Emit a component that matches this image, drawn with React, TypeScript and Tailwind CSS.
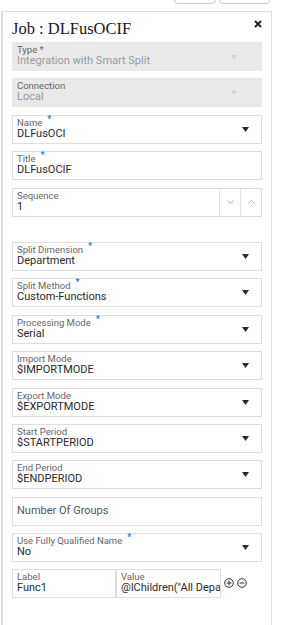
import React from "react";

const sans = { fontFamily: "Roboto, 'Noto Sans', Arial, sans-serif" };

function Req() {
  return (
    <span className="relative -top-[3px] ml-[5px] text-[9px] font-bold leading-none text-[#2a78c2]">*</span>
  );
}

function Caret({ disabled }: { disabled?: boolean }) {
  return disabled ? (
    <svg width="6" height="4" viewBox="0 0 6 4" className="mr-[24px] shrink-0">
      <path d="M0 0 L6 0 L3 4 Z" fill="#d2d2d2" />
    </svg>
  ) : (
    <svg width="7" height="5" viewBox="0 0 7 5" className="mr-[12px] shrink-0">
      <path d="M0 0 L7 0 L3.5 5 Z" fill="#2b2b2b" />
    </svg>
  );
}

function Field({
  label,
  value,
  req,
  disabled,
  caret = true,
  className = "",
}: {
  label: string;
  value: string;
  req?: boolean;
  disabled?: boolean;
  caret?: boolean;
  className?: string;
}) {
  return (
    <div
      className={`box-border flex h-[29px] w-[250px] items-center border ${
        disabled ? "border-[#e8e8e8] bg-[#e9e9e9]" : "border-[#dedede] bg-white"
      } ${className}`}
    >
      <div className="flex min-w-0 flex-1 flex-col self-stretch pl-[4px] pt-[2px]">
        <div className="flex items-start text-[9.5px] leading-[10px] text-[#666]">
          <span>{label}</span>
          {req && <Req />}
        </div>
        <div className={`text-[11px] leading-[12px] ${disabled ? "text-[#9a9a9a]" : "text-[#2a2a2a]"}`}>{value}</div>
      </div>
      {caret && <Caret disabled={disabled} />}
    </div>
  );
}

export default function App() {
  return (
    <div className="h-[625px] w-[282px] overflow-hidden bg-white" style={sans}>
      {/* top buttons (cut off) */}
      <div className="flex h-[4px] items-end gap-[3px] overflow-hidden pl-[174px]">
        <div className="box-border h-[20px] w-[42px] rounded-[4px] border border-[#c9c9c9]" />
        <div className="box-border h-[20px] w-[51px] rounded-[4px] border border-[#c9c9c9]" />
      </div>

      {/* panel */}
      <div className="ml-[1px] mt-[7px] box-border h-[640px] w-[271px] border-l-2 border-r border-t border-[#dfdfdf] px-[9px]">
        <div className="flex h-[30px] items-start justify-between">
          <div
            className="pt-[7px] text-[16.5px] leading-[20px] text-[#1a1a1a]"
            style={{ fontFamily: "'Liberation Serif', 'Times New Roman', serif" }}
          >
            Job : DLFusOCIF
          </div>
          <svg width="8" height="8" viewBox="0 0 8 8" className="mt-[8px]">
            <path d="M1 1 L7 7 M7 1 L1 7" stroke="#222" strokeWidth="2" />
          </svg>
        </div>

        <div className="flex flex-col gap-[7.4px]">
          <Field label="Type *" value="Integration with Smart Split" disabled />
          <Field label="Connection" value="Local" disabled />
          <Field label="Name" value="DLFusOCI" req />
          <Field label="Title" value="DLFusOCIF" req caret={false} />
          <div className="box-border flex h-[29px] w-[250px] border border-[#dedede] bg-white">
            <div className="flex min-w-0 flex-1 flex-col pl-[4px] pt-[2px]">
              <div className="text-[9.5px] leading-[10px] text-[#666]">Sequence</div>
              <div className="text-[11px] leading-[12px] text-[#2a2a2a]">1</div>
            </div>
            <div className="flex w-[21px] items-center justify-center border-l border-[#e3e3e3]">
              <svg width="7" height="4" viewBox="0 0 7 4">
                <path d="M0.5 0.5 L3.5 3.5 L6.5 0.5" fill="none" stroke="#b5b5b5" strokeWidth="1" />
              </svg>
            </div>
            <div className="flex w-[21px] items-center justify-center border-l border-[#e3e3e3]">
              <svg width="7" height="4" viewBox="0 0 7 4">
                <path d="M0.5 3.5 L3.5 0.5 L6.5 3.5" fill="none" stroke="#b5b5b5" strokeWidth="1" />
              </svg>
            </div>
          </div>

          <Field label="Split Dimension" value="Department" req className="mt-[18px]" />
          <Field label="Split Method" value="Custom-Functions" req />
          <Field label="Processing Mode" value="Serial" req />
          <Field label="Import Mode" value="$IMPORTMODE" />
          <Field label="Export Mode" value="$EXPORTMODE" />
          <Field label="Start Period" value="$STARTPERIOD" />
          <Field label="End Period" value="$ENDPERIOD" />
          <div className="box-border flex h-[29px] w-[250px] items-center border border-[#dedede] bg-white pl-[4px] text-[11px] text-[#555]">
            Number Of Groups
          </div>
          <Field label="Use Fully Qualified Name" value="No" req />

          <div className="flex items-start">
            <div className="box-border flex h-[29px] w-[104px] flex-col border border-[#dedede] pl-[4px] pt-[2px]">
              <div className="text-[9.5px] leading-[10px] text-[#666]">Label</div>
              <div className="text-[11px] leading-[12px] text-[#2a2a2a]">Func1</div>
            </div>
            <div className="box-border flex h-[29px] w-[105px] flex-col overflow-hidden whitespace-nowrap border border-[#dedede] pl-[4px] pt-[2px]">
              <div className="text-[9.5px] leading-[10px] text-[#666]">Value</div>
              <div className="text-[11px] leading-[12px] text-[#2a2a2a]">@lChildren("All Departments")</div>
            </div>
            <div className="ml-[3px] mt-[9px] flex gap-[3px]">
              <svg width="10" height="10" viewBox="0 0 10 10">
                <circle cx="5" cy="5" r="4.3" fill="none" stroke="#333" strokeWidth="1" />
                <path d="M5 2.5 V7.5 M2.5 5 H7.5" stroke="#333" strokeWidth="1" />
              </svg>
              <svg width="10" height="10" viewBox="0 0 10 10">
                <circle cx="5" cy="5" r="4.3" fill="none" stroke="#333" strokeWidth="1" />
                <path d="M2.5 5 H7.5" stroke="#333" strokeWidth="1" />
              </svg>
            </div>
          </div>
        </div>
      </div>
    </div>
  );
}
